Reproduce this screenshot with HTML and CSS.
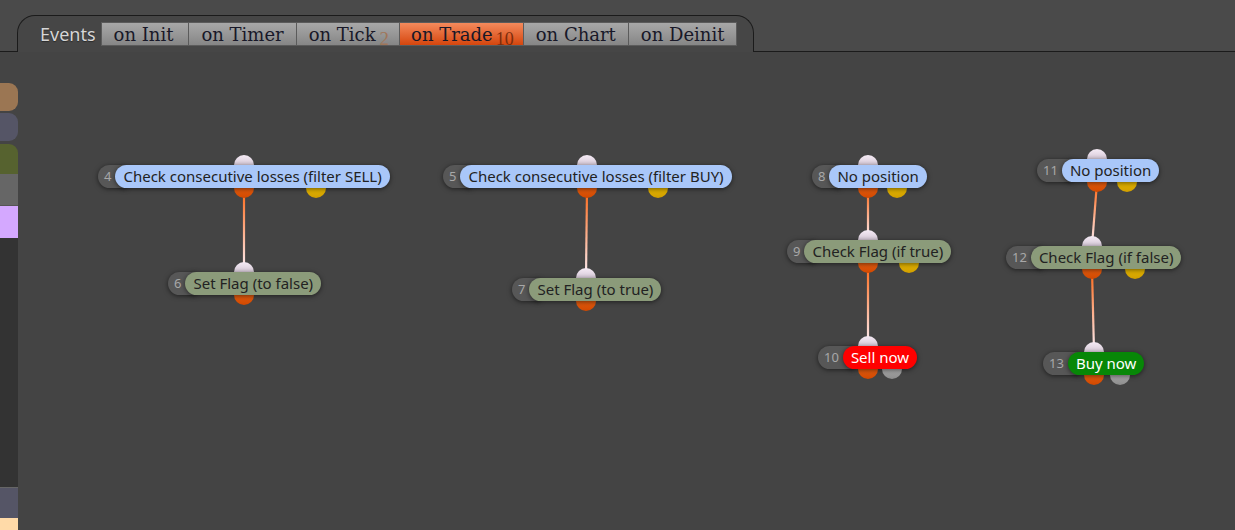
FILE: index.html
```html
<!DOCTYPE html>
<html lang="en">

<head>
    <meta charset="UTF-8">
    <meta name="viewport" content="width=device-width, initial-scale=1.0">
    <title>Events</title>
    <link rel="stylesheet" href="styles.css">
</head>

<body>
    <header class="topbar">
        <div class="tab">
            <span class="tab-title">Events</span>
            <div class="events">
                <button class="ev ev-init">on Init</button>
                <button class="ev">on Timer</button>
                <button class="ev ev-tick">on Tick<span class="cnt">2</span></button>
                <button class="ev active">on Trade<span class="cnt">10</span></button>
                <button class="ev">on Chart</button>
                <button class="ev">on Deinit</button>
            </div>
        </div>
    </header>

    <main class="main">
        <aside class="sidebar">
            <div class="blk brown"></div>
            <div class="blk slate"></div>
            <div class="blk olive"></div>
            <div class="blk grey"></div>
            <div class="blk lilac"></div>
            <div class="blk dark"></div>
            <div class="blk slate2"></div>
            <div class="blk peach"></div>
        </aside>

        <section class="canvas">
            <svg class="wires" width="1217" height="478">
                <defs>
                    <linearGradient id="w1" gradientUnits="userSpaceOnUse" x1="226" y1="136" x2="226" y2="220">
                        <stop offset="0" stop-color="#ff6410" />
                        <stop offset="1" stop-color="#fbf2fb" />
                    </linearGradient>
                    <linearGradient id="w2" gradientUnits="userSpaceOnUse" x1="569" y1="136" x2="568" y2="226">
                        <stop offset="0" stop-color="#ff6410" />
                        <stop offset="1" stop-color="#fbf2fb" />
                    </linearGradient>
                    <linearGradient id="w3" gradientUnits="userSpaceOnUse" x1="850" y1="136" x2="850" y2="188">
                        <stop offset="0" stop-color="#ff6410" />
                        <stop offset="1" stop-color="#fbf2fb" />
                    </linearGradient>
                    <linearGradient id="w4" gradientUnits="userSpaceOnUse" x1="850" y1="211" x2="850" y2="294">
                        <stop offset="0" stop-color="#ff6410" />
                        <stop offset="1" stop-color="#fbf2fb" />
                    </linearGradient>
                    <linearGradient id="w5" gradientUnits="userSpaceOnUse" x1="1079" y1="130" x2="1074" y2="194">
                        <stop offset="0" stop-color="#ff6410" />
                        <stop offset="1" stop-color="#fbf2fb" />
                    </linearGradient>
                    <linearGradient id="w6" gradientUnits="userSpaceOnUse" x1="1074" y1="217" x2="1076" y2="300">
                        <stop offset="0" stop-color="#ff6410" />
                        <stop offset="1" stop-color="#fbf2fb" />
                    </linearGradient>
                </defs>
                <line x1="226" y1="136" x2="226" y2="220" stroke="url(#w1)" stroke-width="2.2" />
                <line x1="569" y1="136" x2="568" y2="226" stroke="url(#w2)" stroke-width="2.2" />
                <line x1="850" y1="136" x2="850" y2="188" stroke="url(#w3)" stroke-width="2.2" />
                <line x1="850" y1="211" x2="850" y2="294" stroke="url(#w4)" stroke-width="2.2" />
                <line x1="1079" y1="130" x2="1074" y2="194" stroke="url(#w5)" stroke-width="2.2" />
                <line x1="1074" y1="217" x2="1076" y2="300" stroke="url(#w6)" stroke-width="2.2" />
            </svg>

            <div class="node n4">
                <span class="pin in"></span><span class="pin out"></span><span class="pin yes"></span>
                <span class="num">4</span>
                <span class="label blue">Check consecutive losses (filter SELL)</span>
            </div>
            <div class="node n5">
                <span class="pin in"></span><span class="pin out"></span><span class="pin yes"></span>
                <span class="num">5</span>
                <span class="label blue">Check consecutive losses (filter BUY)</span>
            </div>
            <div class="node n6">
                <span class="pin in"></span><span class="pin out"></span>
                <span class="num">6</span>
                <span class="label sage">Set Flag (to false)</span>
            </div>
            <div class="node n7">
                <span class="pin in"></span><span class="pin out"></span>
                <span class="num">7</span>
                <span class="label sage">Set Flag (to true)</span>
            </div>
            <div class="node n8">
                <span class="pin in"></span><span class="pin out"></span><span class="pin yes"></span>
                <span class="num">8</span>
                <span class="label blue">No position</span>
            </div>
            <div class="node n9">
                <span class="pin in"></span><span class="pin out"></span><span class="pin yes"></span>
                <span class="num">9</span>
                <span class="label sage">Check Flag (if true)</span>
            </div>
            <div class="node n10">
                <span class="pin in"></span><span class="pin out"></span><span class="pin no"></span>
                <span class="num">10</span>
                <span class="label sell">Sell now</span>
            </div>
            <div class="node n11">
                <span class="pin in"></span><span class="pin out"></span><span class="pin yes"></span>
                <span class="num">11</span>
                <span class="label blue">No position</span>
            </div>
            <div class="node n12">
                <span class="pin in"></span><span class="pin out"></span><span class="pin yes"></span>
                <span class="num">12</span>
                <span class="label sage">Check Flag (if false)</span>
            </div>
            <div class="node n13">
                <span class="pin in"></span><span class="pin out"></span><span class="pin no"></span>
                <span class="num">13</span>
                <span class="label buy">Buy now</span>
            </div>
        </section>
    </main>
</body>

</html>
```

FILE: styles.css
```css
body {
    margin: 0;
    padding: 0;
    width: 1235px;
    height: 530px;
    overflow: hidden;
    background-color: #444;
    font-family: "Noto Sans", sans-serif;
}

/* top tab strip */
.topbar {
    height: 52px;
    box-sizing: border-box;
    display: flex;
    align-items: flex-end;
    background-color: #4a4a4a;
    border-bottom: 1px solid #1b1b1b;
}

.tab {
    box-sizing: border-box;
    width: 737px;
    height: 37px;
    margin-left: 17px;
    margin-bottom: -1px;
    padding: 6px 0 0 22px;
    display: flex;
    align-items: flex-start;
    background-color: #464646;
    border: 1px solid #1b1b1b;
    border-bottom: none;
    border-radius: 18px 18px 0 0;
}

.tab-title {
    font-size: 18px;
    line-height: 24px;
    color: #d6d6d6;
    text-shadow: 0 1px 1px rgba(0, 0, 0, 0.4);
    margin-right: 6px;
}

.events {
    display: flex;
}

.ev {
    box-sizing: border-box;
    height: 24px;
    padding: 1px 12px 0 12px;
    margin: 0 0 0 -1px;
    font-family: "DejaVu Serif", serif;
    font-size: 18px;
    line-height: 22px;
    color: #181828;
    border: 1px solid #5b5b5b;
    border-radius: 0;
    background: linear-gradient(#a8a8a8, #868686);
    white-space: nowrap;
    cursor: pointer;
}

.ev-init {
    padding-right: 15px;
}

.ev-tick {
    padding-right: 10px;
}

.ev.active {
    background: linear-gradient(#f48a5c, #d5460e);
    padding: 1px 9px 0 11px;
}

.ev .cnt {
    font-family: "Liberation Serif", serif;
    font-size: 19px;
    margin-left: 4px;
    vertical-align: -4px;
    color: #a0765a;
}

.ev.active .cnt {
    font-size: 18px;
    color: #7c2c0c;
    margin-left: 3px;
}

/* body */
.main {
    display: flex;
    height: 478px;
}

.sidebar {
    width: 18px;
    padding-top: 31px;
    display: flex;
    flex-direction: column;
}

.blk {
    width: 18px;
}

.brown { height: 28px; background-color: #9b7653; border-radius: 0 9px 9px 0; margin-bottom: 2px; }
.slate { height: 28px; background-color: #555566; border-radius: 0 9px 9px 0; margin-bottom: 3px; }
.olive { height: 30px; background-color: #56622f; border-radius: 0 9px 0 0; }
.grey { height: 31px; background-color: #666; }
.lilac { height: 32px; background-color: #d4a8ff; border-top: 1px solid #555; }
.dark { height: 250px; background-color: #333; }
.slate2 { height: 30px; background-color: #555566; border-top: 1px solid #666; }
.peach { height: 12px; background-color: #ffdaa8; }

.canvas {
    position: relative;
    z-index: 0;
    flex: 1;
    background-color: #444;
}

.wires {
    position: absolute;
    left: 0;
    top: 0;
    z-index: -2;
}

/* nodes */
.node {
    position: absolute;
    display: flex;
    height: 23px;
    white-space: nowrap;
}

.num {
    height: 23px;
    line-height: 23px;
    padding: 0 15px 0 6px;
    font-size: 13px;
    color: #a8a8a8;
    background-color: #575757;
    border-radius: 12px 0 0 12px;
    box-shadow: 0 1px 5px rgba(0, 0, 0, 0.55);
}

.label {
    height: 23px;
    line-height: 23px;
    margin-left: -11px;
    padding: 0 8px;
    font-size: 15px;
    color: #222;
    border-radius: 12px;
    box-shadow: 0 1px 5px rgba(0, 0, 0, 0.55);
}

.blue { background-color: #a9c7f9; }
.sage { background-color: #8b9b7a; }
.sell { background-color: #ff0000; color: #fff; }
.buy { background-color: #078707; color: #fff; }

.pin {
    position: absolute;
    z-index: -1;
    width: 20px;
    height: 20px;
    border-radius: 50%;
}

.pin.in {
    top: -10px;
    background: linear-gradient(#f5ebf5, #b8a8ba);
}

.pin.out {
    top: 13px;
    background: linear-gradient(#ff7420, #d04800);
}

.pin.yes {
    top: 13px;
    background: linear-gradient(#ffd200, #d09e00);
}

.pin.no {
    top: 13px;
    background: linear-gradient(#c8c8c8, #8c8c8c);
}

.n4 { left: 80px; top: 113px; }
.n4 .in, .n4 .out { left: 136px; }
.n4 .yes { left: 208px; }

.n5 { left: 425px; top: 113px; }
.n5 .in, .n5 .out { left: 134px; }
.n5 .yes { left: 205px; }

.n6 { left: 150px; top: 220px; }
.n6 .in, .n6 .out { left: 66px; }

.n7 { left: 494px; top: 226px; }
.n7 .in, .n7 .out { left: 64px; }

.n8 { left: 794px; top: 113px; }
.n8 .in, .n8 .out { left: 46px; }
.n8 .yes { left: 75px; }

.n9 { left: 769px; top: 188px; }
.n9 .in, .n9 .out { left: 71px; }
.n9 .yes { left: 112px; }

.n10 { left: 800px; top: 294px; }
.n10 .in, .n10 .out { left: 40px; }
.n10 .no { left: 64px; }

.n11 { left: 1019px; top: 107px; }
.n11 .in, .n11 .out { left: 50px; }
.n11 .yes { left: 80px; }

.n12 { left: 988px; top: 194px; }
.n12 .in, .n12 .out { left: 76px; }
.n12 .yes { left: 119px; }

.n13 { left: 1025px; top: 300px; }
.n13 .in, .n13 .out { left: 41px; }
.n13 .no { left: 67px; }
```
